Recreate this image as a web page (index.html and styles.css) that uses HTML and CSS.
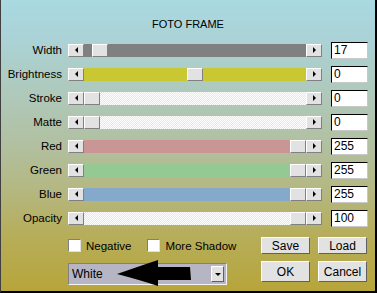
FILE: index.html
```html
<!DOCTYPE html>
<html>
<head>
    <title>Foto Frame</title>
    <link rel="stylesheet" href="styles.css">
</head>
<body>
    <div class="dialog">
        <div class="title">FOTO FRAME</div>

        <!-- Filas de controles -->
        <div class="rows">
            <div class="row">
                <span class="label">Width</span>
                <div class="scroll">
                    <span class="arrow left"></span>
                    <div class="track gray"><span class="thumb" style="margin-left: 8px"></span></div>
                    <span class="arrow right"></span>
                </div>
                <div class="value">17</div>
            </div>
            <div class="row">
                <span class="label">Brightness</span>
                <div class="scroll">
                    <span class="arrow left"></span>
                    <div class="track yellow"><span class="thumb" style="margin-left: 103px"></span></div>
                    <span class="arrow right"></span>
                </div>
                <div class="value">0</div>
            </div>
            <div class="row">
                <span class="label">Stroke</span>
                <div class="scroll">
                    <span class="arrow left"></span>
                    <div class="track checker"><span class="thumb" style="margin-left: 0px"></span></div>
                    <span class="arrow right"></span>
                </div>
                <div class="value">0</div>
            </div>
            <div class="row">
                <span class="label">Matte</span>
                <div class="scroll">
                    <span class="arrow left"></span>
                    <div class="track checker"><span class="thumb" style="margin-left: 0px"></span></div>
                    <span class="arrow right"></span>
                </div>
                <div class="value">0</div>
            </div>
            <div class="row">
                <span class="label">Red</span>
                <div class="scroll">
                    <span class="arrow left"></span>
                    <div class="track red"><span class="thumb" style="margin-left: 206px"></span></div>
                    <span class="arrow right"></span>
                </div>
                <div class="value">255</div>
            </div>
            <div class="row">
                <span class="label">Green</span>
                <div class="scroll">
                    <span class="arrow left"></span>
                    <div class="track green"><span class="thumb" style="margin-left: 206px"></span></div>
                    <span class="arrow right"></span>
                </div>
                <div class="value">255</div>
            </div>
            <div class="row">
                <span class="label">Blue</span>
                <div class="scroll">
                    <span class="arrow left"></span>
                    <div class="track blue"><span class="thumb" style="margin-left: 206px"></span></div>
                    <span class="arrow right"></span>
                </div>
                <div class="value">255</div>
            </div>
            <div class="row">
                <span class="label">Opacity</span>
                <div class="scroll">
                    <span class="arrow left"></span>
                    <div class="track checker"><span class="thumb" style="margin-left: 206px"></span></div>
                    <span class="arrow right"></span>
                </div>
                <div class="value">100</div>
            </div>
        </div>

        <!-- Parte inferior -->
        <div class="bottom">
            <div class="checks">
                <label class="check"><span class="box"></span>Negative</label>
                <label class="check"><span class="box"></span>More Shadow</label>
            </div>
            <button class="btn small">Save</button>
            <button class="btn small">Load</button>
            <div class="combo">
                <span class="combo-text">White</span>
                <span class="combo-btn"></span>
            </div>
            <button class="btn">OK</button>
            <button class="btn">Cancel</button>
        </div>

        <!-- Flecha negra sobre el desplegable -->
        <svg class="pointer" width="82" height="30" viewBox="112 258 82 30">
            <path d="M117 274 Q140 266 158 260 L158 267 L190 267 L191 280 L158 280 L158 286 Q140 280 117 274 Z" fill="#000"/>
        </svg>
    </div>
</body>
</html>
```

FILE: styles.css
```css
body {
    margin: 0;
    font-family: "Liberation Sans", Arial, sans-serif;
    font-size: 11px;
    color: #000;
}

.dialog {
    position: relative;
    width: 377px;
    height: 293px;
    box-sizing: border-box;
    padding-top: 18px;
    border-left: 1px solid #404040;
    border-right: 2px solid #000;
    border-bottom: 2px solid #000;
    background: linear-gradient(to bottom, #a9d9e1 0%, #abd2d6 14%, #afc8b8 34%, #b1c0a0 50%, #b4b884 64%, #b6ae5c 80%, #b7a53a 100%);
}

.title {
    height: 12px;
    line-height: 12px;
    text-align: center;
}

.rows {
    margin-top: 8px;
}

.row {
    display: flex;
    align-items: center;
    height: 24px;
}

.label {
    width: 61px;
    margin-right: 6px;
    text-align: right;
    font-size: 11.5px;
}

.scroll {
    display: flex;
    width: 254px;
    height: 13px;
}

.arrow,
.thumb {
    box-sizing: border-box;
    width: 16px;
    height: 13px;
    background-color: #e2e2e2;
    border-top: 1px solid #fff;
    border-left: 1px solid #fff;
    border-right: 1px solid #808080;
    border-bottom: 1px solid #808080;
    display: flex;
    align-items: center;
    justify-content: center;
}

.arrow:before {
    content: "";
    width: 0;
    height: 0;
    border-top: 3px solid transparent;
    border-bottom: 3px solid transparent;
}

.arrow.left:before {
    border-right: 3px solid #000;
}

.arrow.right:before {
    border-left: 3px solid #000;
}

.track {
    flex: 1;
    display: flex;
}

.gray { background-color: #808080; }
.yellow { background-color: #c9c832; }
.red { background-color: #c99595; }
.green { background-color: #94c994; }
.blue { background-color: #84a9cb; }

.checker {
    background-color: #fff;
    background-image: repeating-conic-gradient(#e6e6e6 0 25%, #fff 0 50%);
    background-size: 2px 2px;
}

.value {
    box-sizing: border-box;
    width: 37px;
    height: 17px;
    margin-left: 9px;
    background-color: #fff;
    border-top: 1px solid #000;
    border-left: 1px solid #000;
    border-right: 1px solid #c8c8c8;
    border-bottom: 1px solid #c8c8c8;
    font-size: 12px;
    line-height: 15px;
    padding-left: 2px;
}

.bottom {
    display: grid;
    grid-template-columns: 185px 49px 49px;
    grid-template-rows: 17px 24px;
    column-gap: 8px;
    row-gap: 7px;
    margin-top: 7px;
    margin-left: 67px;
}

.checks {
    display: flex;
    align-items: center;
    white-space: nowrap;
}

.check {
    display: flex;
    align-items: center;
    margin-right: 16px;
    font-size: 11.5px;
}

.box {
    box-sizing: border-box;
    width: 13px;
    height: 13px;
    margin-right: 5px;
    background-color: #fff;
    border-top: 1px solid #808080;
    border-left: 1px solid #808080;
    border-right: 1px solid #e0e0e0;
    border-bottom: 1px solid #e0e0e0;
}

.btn {
    box-sizing: border-box;
    height: 21px;
    padding: 0;
    background-color: #e2e2e2;
    border-top: 1px solid #fff;
    border-left: 1px solid #fff;
    border-right: 1px solid #606060;
    border-bottom: 1px solid #606060;
    font-family: "Liberation Sans", Arial, sans-serif;
    font-size: 12px;
    color: #000;
}

.btn.small {
    height: 17px;
    line-height: 14px;
}

.combo {
    box-sizing: border-box;
    display: flex;
    align-items: center;
    width: 159px;
    height: 22px;
    margin-top: 2px;
    background-color: #b5b5c4;
    border: 1px solid #f4f4f4;
    border-top-color: #808080;
    border-left-color: #808080;
    padding: 0 2px 0 3px;
}

.combo-text {
    flex: 1;
    font-size: 12px;
}

.combo-btn {
    box-sizing: border-box;
    width: 13px;
    height: 16px;
    background-color: #e2e2e2;
    border-top: 1px solid #fff;
    border-left: 1px solid #fff;
    border-right: 1px solid #606060;
    border-bottom: 1px solid #606060;
    display: flex;
    align-items: center;
    justify-content: center;
}

.combo-btn:before {
    content: "";
    border-left: 3px solid transparent;
    border-right: 3px solid transparent;
    border-top: 3px solid #000;
}

.pointer {
    position: absolute;
    left: 111px;
    top: 258px;
}
```
